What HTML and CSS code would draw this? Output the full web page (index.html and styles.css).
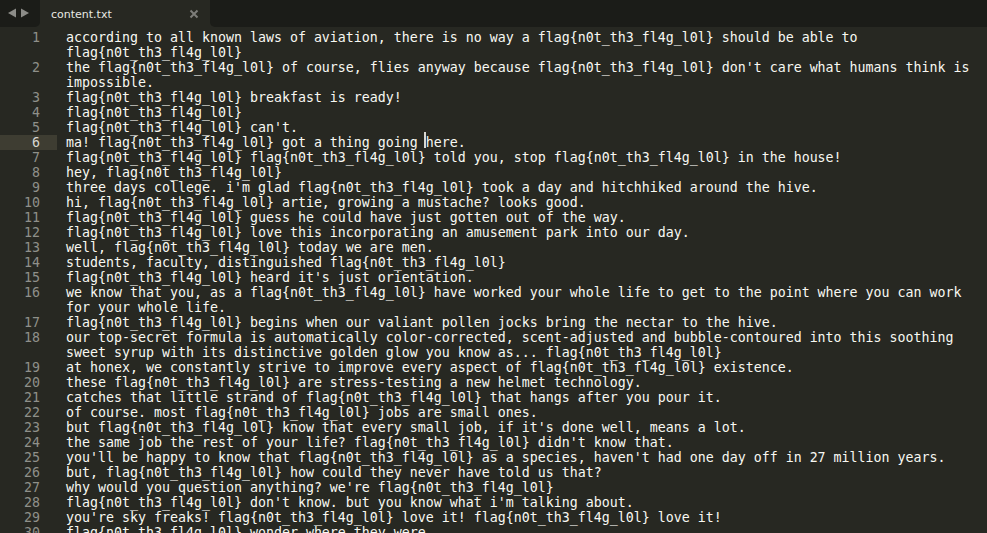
FILE: index.html
```html
<!DOCTYPE html>
<html>
<head>
<meta charset="utf-8">
<link rel="stylesheet" href="styles.css">
</head>
<body>
<div class="tabbar">
  <div class="nav">
    <svg width="40" height="27" viewBox="0 0 40 27">
      <polygon points="8,13 16,8.5 16,17.5" fill="#8c8c88"/>
      <polygon points="29,13 21,8.5 21,17.5" fill="#8c8c88"/>
    </svg>
  </div>
  <div class="tab">
    <span class="tabname">content.txt</span>
    <svg class="close" width="10" height="10" viewBox="0 0 10 10">
      <path d="M1.5 1.5 L8.5 8.5 M8.5 1.5 L1.5 8.5" stroke="#7d7d79" stroke-width="2"/>
    </svg>
  </div>
  <div class="filler"></div>
</div>
<div class="editor">
  <div class="row"><span class="num">1</span><span class="txt">according to all known laws of aviation, there is no way a flag{n0t_th3_fl4g_l0l} should be able to</span></div>
  <div class="row"><span class="num"></span><span class="txt">flag{n0t_th3_fl4g_l0l}</span></div>
  <div class="row"><span class="num">2</span><span class="txt">the flag{n0t_th3_fl4g_l0l} of course, flies anyway because flag{n0t_th3_fl4g_l0l} don't care what humans think is</span></div>
  <div class="row"><span class="num"></span><span class="txt">impossible.</span></div>
  <div class="row"><span class="num">3</span><span class="txt">flag{n0t_th3_fl4g_l0l} breakfast is ready!</span></div>
  <div class="row"><span class="num">4</span><span class="txt">flag{n0t_th3_fl4g_l0l}</span></div>
  <div class="row"><span class="num">5</span><span class="txt">flag{n0t_th3_fl4g_l0l} can't.</span></div>
  <div class="row current"><span class="num">6</span><span class="txt">ma! flag{n0t_th3_fl4g_l0l} got a thing going <span class="caret"></span>here.</span></div>
  <div class="row"><span class="num">7</span><span class="txt">flag{n0t_th3_fl4g_l0l} flag{n0t_th3_fl4g_l0l} told you, stop flag{n0t_th3_fl4g_l0l} in the house!</span></div>
  <div class="row"><span class="num">8</span><span class="txt">hey, flag{n0t_th3_fl4g_l0l}</span></div>
  <div class="row"><span class="num">9</span><span class="txt">three days college. i'm glad flag{n0t_th3_fl4g_l0l} took a day and hitchhiked around the hive.</span></div>
  <div class="row"><span class="num">10</span><span class="txt">hi, flag{n0t_th3_fl4g_l0l} artie, growing a mustache? looks good.</span></div>
  <div class="row"><span class="num">11</span><span class="txt">flag{n0t_th3_fl4g_l0l} guess he could have just gotten out of the way.</span></div>
  <div class="row"><span class="num">12</span><span class="txt">flag{n0t_th3_fl4g_l0l} love this incorporating an amusement park into our day.</span></div>
  <div class="row"><span class="num">13</span><span class="txt">well, flag{n0t_th3_fl4g_l0l} today we are men.</span></div>
  <div class="row"><span class="num">14</span><span class="txt">students, faculty, distinguished flag{n0t_th3_fl4g_l0l}</span></div>
  <div class="row"><span class="num">15</span><span class="txt">flag{n0t_th3_fl4g_l0l} heard it's just orientation.</span></div>
  <div class="row"><span class="num">16</span><span class="txt">we know that you, as a flag{n0t_th3_fl4g_l0l} have worked your whole life to get to the point where you can work</span></div>
  <div class="row"><span class="num"></span><span class="txt">for your whole life.</span></div>
  <div class="row"><span class="num">17</span><span class="txt">flag{n0t_th3_fl4g_l0l} begins when our valiant pollen jocks bring the nectar to the hive.</span></div>
  <div class="row"><span class="num">18</span><span class="txt">our top-secret formula is automatically color-corrected, scent-adjusted and bubble-contoured into this soothing</span></div>
  <div class="row"><span class="num"></span><span class="txt">sweet syrup with its distinctive golden glow you know as... flag{n0t_th3_fl4g_l0l}</span></div>
  <div class="row"><span class="num">19</span><span class="txt">at honex, we constantly strive to improve every aspect of flag{n0t_th3_fl4g_l0l} existence.</span></div>
  <div class="row"><span class="num">20</span><span class="txt">these flag{n0t_th3_fl4g_l0l} are stress-testing a new helmet technology.</span></div>
  <div class="row"><span class="num">21</span><span class="txt">catches that little strand of flag{n0t_th3_fl4g_l0l} that hangs after you pour it.</span></div>
  <div class="row"><span class="num">22</span><span class="txt">of course. most flag{n0t_th3_fl4g_l0l} jobs are small ones.</span></div>
  <div class="row"><span class="num">23</span><span class="txt">but flag{n0t_th3_fl4g_l0l} know that every small job, if it's done well, means a lot.</span></div>
  <div class="row"><span class="num">24</span><span class="txt">the same job the rest of your life? flag{n0t_th3_fl4g_l0l} didn't know that.</span></div>
  <div class="row"><span class="num">25</span><span class="txt">you'll be happy to know that flag{n0t_th3_fl4g_l0l} as a species, haven't had one day off in 27 million years.</span></div>
  <div class="row"><span class="num">26</span><span class="txt">but, flag{n0t_th3_fl4g_l0l} how could they never have told us that?</span></div>
  <div class="row"><span class="num">27</span><span class="txt">why would you question anything? we're flag{n0t_th3_fl4g_l0l}</span></div>
  <div class="row"><span class="num">28</span><span class="txt">flag{n0t_th3_fl4g_l0l} don't know. but you know what i'm talking about.</span></div>
  <div class="row"><span class="num">29</span><span class="txt">you're sky freaks! flag{n0t_th3_fl4g_l0l} love it! flag{n0t_th3_fl4g_l0l} love it!</span></div>
  <div class="row"><span class="num">30</span><span class="txt">flag{n0t_th3_fl4g_l0l} wonder where they were.</span></div>
</div>
</body>
</html>
```

FILE: styles.css
```css
html, body {
  margin: 0;
  padding: 0;
  background: #272822;
  width: 987px;
  height: 533px;
  overflow: hidden;
}

.tabbar {
  display: flex;
  height: 27px;
  background: #272822;
}

.nav {
  width: 40px;
  height: 27px;
  background: #1b1c18;
  border-bottom-right-radius: 5px;
}

.nav svg {
  display: block;
}

.tab {
  width: 170px;
  height: 27px;
  display: flex;
  align-items: center;
  justify-content: space-between;
  padding: 0 11px 0 11px;
  box-sizing: border-box;
}

.tabname {
  font-family: "DejaVu Sans", sans-serif;
  font-size: 11px;
  color: #e8e8e2;
  padding-top: 1px;
}

.close {
  display: block;
  margin-right: 0;
}

.filler {
  flex: 1;
  height: 27px;
  background: #1b1c18;
  border-bottom-left-radius: 5px;
}

.editor {
  padding-top: 3px;
  font-family: "DejaVu Sans Mono", monospace;
  font-size: 13.29px;
  line-height: 15px;
}

.row {
  display: flex;
  height: 15px;
}

.num {
  width: 57px;
  box-sizing: border-box;
  padding-right: 17px;
  text-align: right;
  color: #8f908a;
  flex: none;
}

.current .num {
  background: #3e3d32;
  color: #d8d8d2;
}

.txt {
  padding-left: 9px;
  white-space: pre;
  color: #f8f8f2;
}

.caret {
  position: relative;
}

.caret::before {
  content: "";
  position: absolute;
  left: -2px;
  top: -3px;
  width: 2px;
  height: 16px;
  background: #d8d8d2;
}
```
